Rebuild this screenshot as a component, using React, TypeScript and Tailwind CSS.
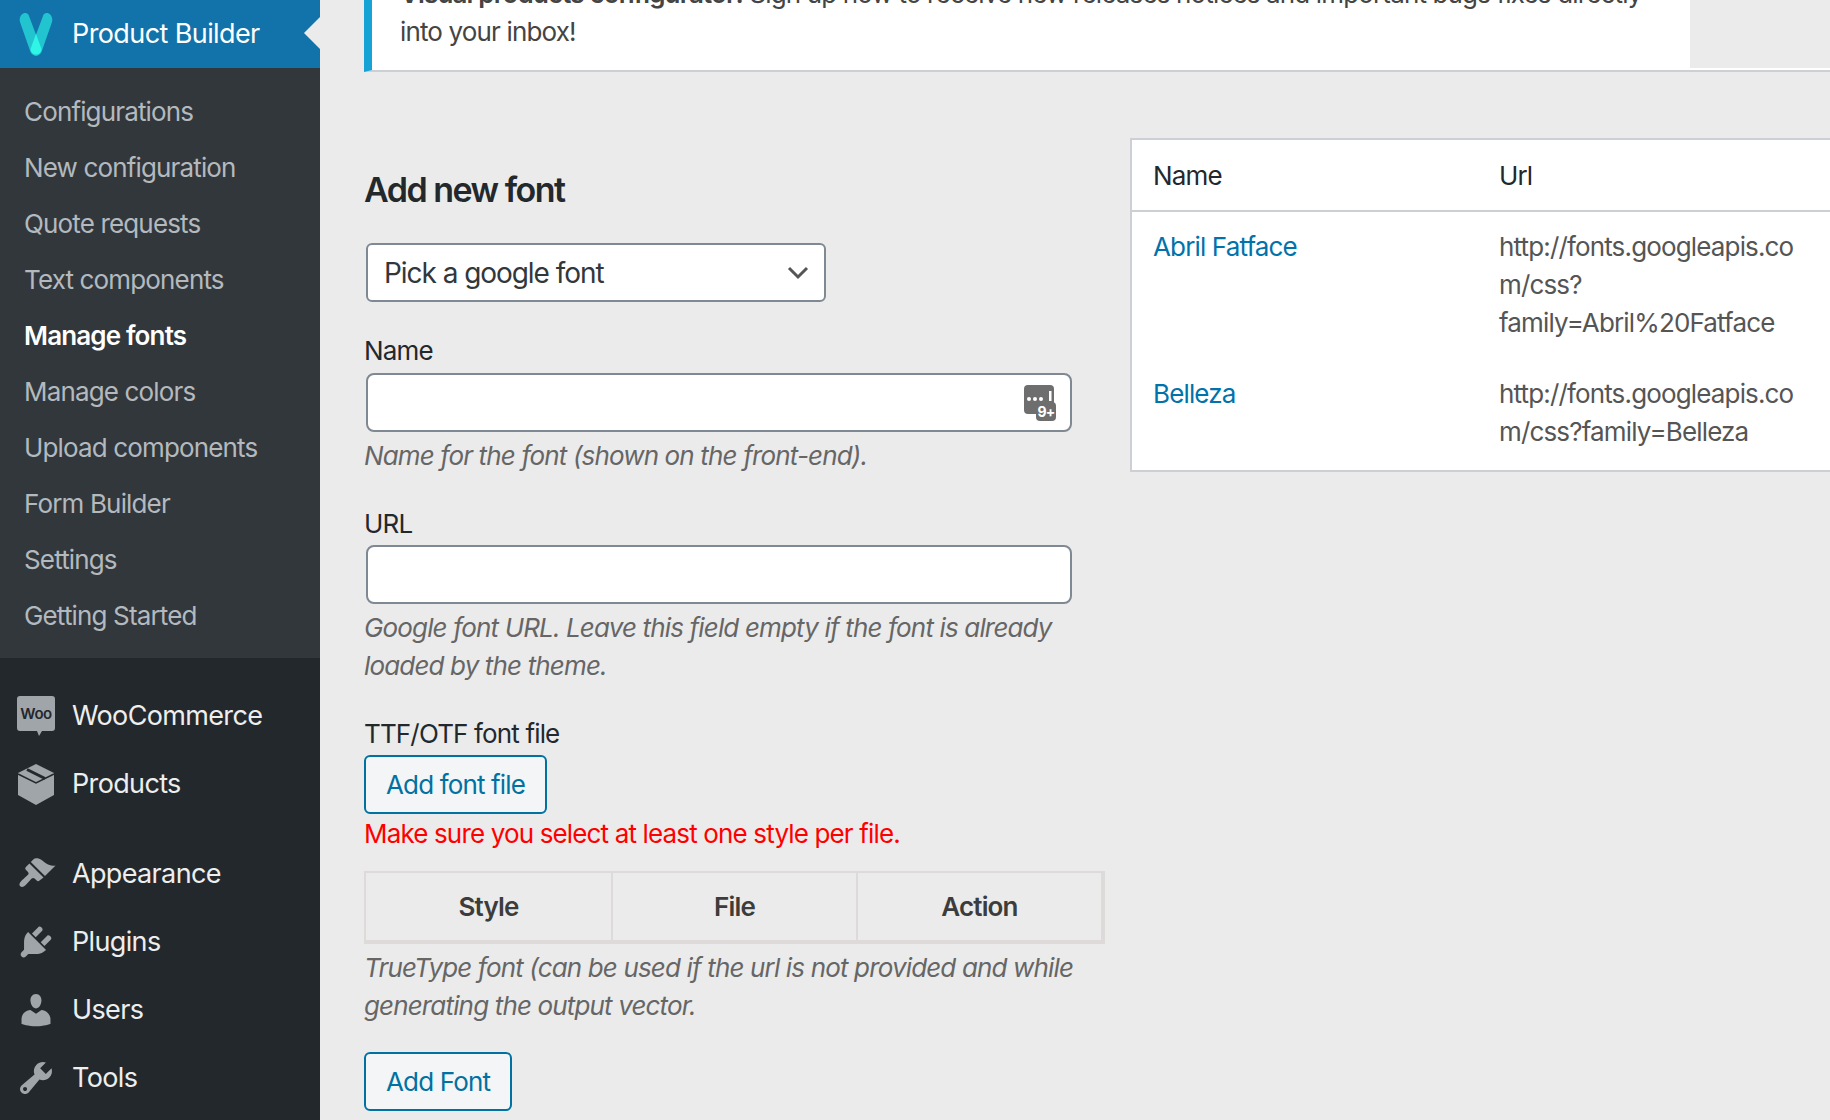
import React from "react";

const Fam = "font-['Inter','Liberation_Sans',sans-serif]";

const sub = ["Configurations","New configuration","Quote requests","Text components","Manage fonts","Manage colors","Upload components","Form Builder","Settings","Getting Started"];

const Dash = ({ d, className = "" }: { d: string; className?: string }) => (
  <svg viewBox="0 0 20 20" className={"w-10 h-10 fill-[#a0a5aa] " + className}><path d={d} /></svg>
);

const appearance = "M14.48 11.06L7.41 3.99l1.5-1.5c.5-.56 2.3-.47 3.51.32 1.21.8 1.43 1.28 2.91 2.1 1.18.64 2.45 1.26 4.45.85zm-.71.71L6.7 4.7 4.93 6.47c-.39.39-.39 1.02 0 1.41l1.06 1.06c.39.39.39 1.03 0 1.42-.6.6-2.46 2.25-2.99 2.78-.94.94-1.78 2.07-.88 2.97.9.9 2.03.06 2.97-.88.53-.53 2.18-2.39 2.78-2.99.39-.39 1.03-.39 1.42 0l1.06 1.06c.39.39 1.02.39 1.41 0z";
const plugins = "M13.11 4.36L9.87 7.6 8 5.73l3.24-3.24c.35-.34 1.05-.2 1.56.32.52.51.66 1.21.31 1.55zm-8 1.77l.91-1.12 9.01 9.01-1.19.84c-.71.71-2.63 1.16-3.82 1.16H6.14L4.9 17.26c-.59.59-1.54.59-2.12 0-.59-.58-.59-1.53 0-2.12l1.24-1.24v-3.88c0-1.13.4-3.19 1.09-3.89zm7.26 3.97l3.24-3.24c.34-.35 1.04-.21 1.55.31.52.51.66 1.21.31 1.55l-3.24 3.25z";
const users = "M10 9.25c-2.27 0-2.73-3.44-2.73-3.44C7 4.02 7.82 2 9.97 2c2.16 0 2.98 2.02 2.71 3.81 0 0-.41 3.44-2.68 3.44zm0 2.57L12.72 10c2.39 0 4.52 2.33 4.52 4.53v2.49s-3.65 1.13-7.24 1.13c-3.65 0-7.24-1.13-7.24-1.13v-2.49c0-2.25 1.94-4.48 4.47-4.48z";
const tools = "M16.68 9.77c-1.34 1.34-3.3 1.67-4.95.99l-5.41 6.52c-.99.99-2.59.99-3.58 0s-.99-2.59 0-3.57l6.52-5.42c-.68-1.65-.35-3.61.99-4.95 1.28-1.28 3.12-1.62 4.72-1.06l-2.89 2.89 2.82 2.82 2.86-2.87c.53 1.58.18 3.39-1.08 4.65zM3.81 16.21c.4.39 1.04.39 1.43 0 .4-.4.4-1.04 0-1.43-.39-.4-1.03-.4-1.43 0-.39.39-.39 1.03 0 1.43z";

const WooIcon = () => (
  <svg viewBox="0 0 40 42" className="w-10 h-[42px]">
    <path d="M4 1h32a3 3 0 0 1 3 3v29a3 3 0 0 1-3 3H26l-3 5-2-5H4a3 3 0 0 1-3-3V4a3 3 0 0 1 3-3z" fill="#a0a5aa" />
    <text x="20" y="24" textAnchor="middle" fontSize="15" fontWeight="600" fill="#23282d" letterSpacing="-0.5" fontFamily="Inter, sans-serif">Woo</text>
  </svg>
);

const BoxIcon = () => (
  <svg viewBox="0 0 40 42" className="w-10 h-[42px]">
    <path d="M20 1l18 9v22l-18 10L2 32V10z" fill="#a0a5aa" />
    <path d="M2 11l18 9 18-9" fill="none" stroke="#23282d" strokeWidth="1.500" />
    <path d="M11 6.500l18 9" fill="none" stroke="#23282d" strokeWidth="3" />
  </svg>
);

const Logo = () => (
  <svg viewBox="0 0 34 46" className="w-[34px] h-[46px]">
    <path d="M10 5l12 32a5.500 5.500 0 0 1-10.500 4L1 11C-1 3 8-1 10 5z" fill="#22c5cf" />
    <path d="M24 5L12 37a5.500 5.500 0 0 0 10.500 4L33 11c2-8-7-12-9-6z" fill="#22c5cf" />
    <path d="M17 23l5.500 15a5.500 5.500 0 0 1-11 0z" fill="#2ff5e6" />
  </svg>
);

const MainItem = ({ icon, label }: { icon: React.ReactNode; label: string }) => (
  <div className="flex items-center h-[68px] pl-[16px]">
    <div className="w-10 flex justify-center items-center">{icon}</div>
    <span className="ml-4 text-[#eeeeee] text-[27px] tracking-[-0.65px]">{label}</span>
  </div>
);

const CountIcon = () => (
  <svg viewBox="0 0 32 36" className="w-8 h-9">
    <rect x="0" y="0" width="30" height="29" rx="4" fill="#6e6e6e" />
    <rect x="12" y="17" width="20" height="19" rx="4" fill="#6e6e6e" />
    <circle cx="5" cy="14" r="2" fill="#fff" /><circle cx="11" cy="14" r="2" fill="#fff" /><circle cx="17" cy="14" r="2" fill="#fff" />
    <rect x="25" y="6" width="2.500" height="10" fill="#fff" />
    <text x="22" y="32" textAnchor="middle" fontSize="14" fontWeight="700" fill="#fff" fontFamily="Inter, sans-serif">9+</text>
  </svg>
);

const inputCls = "mx-[2px] w-[706px] h-[59px] bg-white border-2 border-[#7e8993] rounded-lg flex items-center";
const help = "italic text-[#666666] leading-[38px]";
const btn = "block h-[59px] px-[20px] bg-[#f3f5f6] border-2 border-[#0071a1] rounded-md text-[#0071a1] text-[26px] tracking-[-0.85px]";

export default function App() {
  return (
    <div className={"flex w-[1830px] h-[1120px] overflow-hidden bg-[#ebebeb] text-[26px] tracking-[-0.85px] " + Fam}>
      <aside className="w-[320px] shrink-0 bg-[#23282d]">
        <div className="relative h-[68px] bg-[#1173aa] flex items-center pl-[19px]">
          <Logo />
          <span className="ml-[19px] pt-[1px] text-white text-[27px] tracking-[-0.6px]">Product Builder</span>
          <div className="absolute right-0 top-[17px] border-y-[16px] border-r-[16px] border-y-transparent border-r-[#ebebeb]" />
        </div>
        <div className="bg-[#32373c] py-[15px]">
          {sub.map((s) => (
            <div key={s} className={"h-[56px] flex items-center pl-[24px] " + (s === "Manage fonts" ? "text-white font-semibold" : "text-[#b4b9be]")}>{s}</div>
          ))}
        </div>
        <div className="mt-[24px]">
          <MainItem icon={<WooIcon />} label="WooCommerce" />
          <MainItem icon={<BoxIcon />} label="Products" />
        </div>
        <div className="mt-[22px]">
          <MainItem icon={<Dash d={appearance} />} label="Appearance" />
          <MainItem icon={<Dash d={plugins} />} label="Plugins" />
          <MainItem icon={<Dash d={users} />} label="Users" />
          <MainItem icon={<Dash d={tools} />} label="Tools" />
        </div>
      </aside>

      <main className="flex-1 min-w-0 pl-[44px]">
        <div className="-mt-[25px] w-[1466px] h-[97px] flex bg-white border-l-[8px] border-b-2 border-l-[#17a2d6] border-b-[#ccd0d4]">
          <div className="w-[1318px] h-[93px] pl-[28px] text-[#444444] leading-[38px] whitespace-nowrap">
            <div><b className="font-semibold">Visual products configurator:</b> Sign up now to receive new releases notices and important bugs fixes directly</div>
            <div>into your inbox!</div>
          </div>
          <div className="flex-1 h-[93px] bg-[#ebebeb]" />
        </div>

        <div className="flex">
          <div className="w-[741px] shrink-0">
            <h2 className="mt-[96px] text-[34px] leading-[44px] font-semibold text-[#23282d] tracking-[-1.5px]">Add new font</h2>
            <div className="mx-[2px] mt-[31px] w-[460px] h-[59px] bg-white border-2 border-[#7e8993] rounded-md flex items-center justify-between pl-[16px] pr-[14px] text-[#32373c]">
              <span className="text-[28px] tracking-[-1.05px]">Pick a google font</span>
              <svg viewBox="0 0 24 24" className="w-6 h-6 fill-none stroke-[#555555] stroke-[3]"><path d="M3 7l9 9 9-9" /></svg>
            </div>
            <div className="mt-[30px] leading-[38px] text-[#23282d]">Name</div>
            <div className={inputCls + " mt-[3px] justify-end pr-[14px]"}><CountIcon /></div>
            <div className={"mt-[5px] " + help}>Name for the font (shown on the front-end).</div>
            <div className="mt-[30px] leading-[38px] text-[#23282d]">URL</div>
            <div className={inputCls + " mt-[2px]"} />
            <div className={"mt-[5px] " + help}>Google font URL. Leave this field empty if the font is already<br />loaded by the theme.</div>
            <div className="mt-[30px] leading-[38px] text-[#23282d]">TTF/OTF font file</div>
            <button className={btn + " mt-[2px]"}>Add font file</button>
            <div className="mt-[1px] leading-[38px] text-[#ff0000]">Make sure you select at least one style per file.</div>
            <div className="mt-[18px] h-[73px] w-[741px] grid grid-cols-3 border-2 border-b-[4px] border-r-[4px] border-[#dfdada] font-semibold text-[#3c3c3c] text-center">
              <div className="flex items-center justify-center">Style</div>
              <div className="flex items-center justify-center border-l-2 border-[#dfdada]">File</div>
              <div className="flex items-center justify-center border-l-2 border-[#dfdada]">Action</div>
            </div>
            <div className={"mt-[5px] " + help}>TrueType font (can be used if the url is not provided and while<br />generating the output vector.</div>
            <button className={btn + " mt-[27px]"}>Add Font</button>
          </div>

          <div className="ml-[25px] mt-[66px] w-[720px] shrink-0 self-start bg-white border-2 border-[#ccd0d4]">
            <div className="flex h-[72px] items-center border-b-2 border-[#ccd0d4] text-[#23282d]">
              <div className="w-[367px] pl-[21px]">Name</div>
              <div>Url</div>
            </div>
            <div className="flex pt-[16px] pb-[20px] leading-[38px]">
              <div className="w-[367px] pl-[21px] text-[#0073aa]">Abril Fatface</div>
              <div className="text-[#555555]">http://fonts.googleapis.co<br />m/css?<br />family=Abril%20Fatface</div>
            </div>
            <div className="flex pt-[13px] pb-[19px] leading-[38px]">
              <div className="w-[367px] pl-[21px] text-[#0073aa]">Belleza</div>
              <div className="text-[#555555]">http://fonts.googleapis.co<br />m/css?family=Belleza</div>
            </div>
          </div>
        </div>
      </main>
    </div>
  );
}
